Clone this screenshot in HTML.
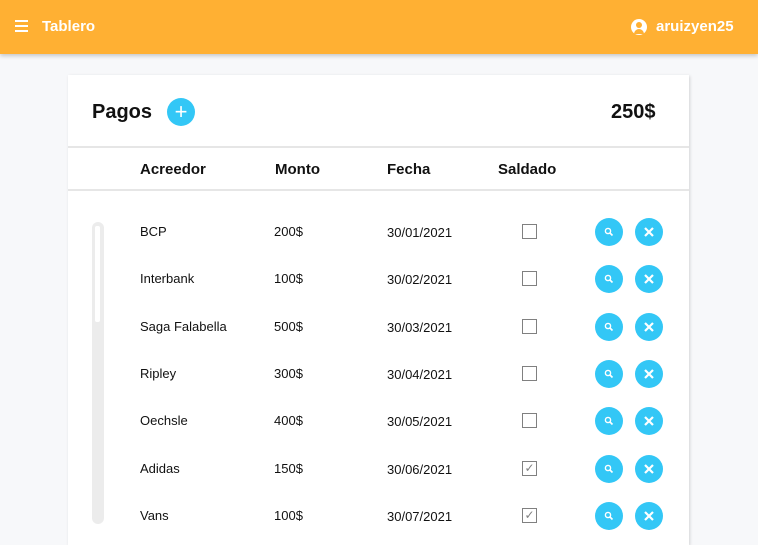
<!DOCTYPE html>
<html><head><style>
body{margin:0;width:758px;height:536px;overflow:hidden;background:#f7f8fa;font-family:"Liberation Sans",sans-serif;position:relative}
.top{position:absolute;left:0;top:0;width:758px;height:54px;background:#ffb033;box-shadow:0 2px 4px rgba(0,0,0,.2);color:#fff;font-weight:bold}
.card{position:absolute;left:68px;top:75px;width:621px;height:470px;background:#fff;box-shadow:1px 1px 3px rgba(0,0,0,.15)}
.abs{position:absolute}
.hd{font-weight:bold;font-size:15px;color:#111;top:161px}
.r{font-size:13px;color:#111}
.cb{position:absolute;left:522px;width:15px;height:15px;border:1.5px solid #808080;box-sizing:border-box}
.btn{position:absolute;width:28px;height:28px;border-radius:50%;background:#33c7f6}
</style></head><body>
<div class="top">
<div class="abs" style="left:15px;top:20px;width:13px;height:1.5px;background:#fff;box-shadow:0 5px 0 #fff,0 10px 0 #fff"></div>
<div class="abs" style="left:42px;top:18px;font-size:15px">Tablero</div>
<div class="abs" style="left:631px;top:19px;width:16px;height:16px;border-radius:50%;background:#fff"><div class="abs" style="left:5px;top:3px;width:6px;height:6px;border-radius:50%;background:#ffb033"></div><div class="abs" style="left:3px;top:10px;width:10px;height:5px;border-radius:5px 5px 0 0;background:#ffb033"></div></div>
<div class="abs" style="left:656px;top:18px;font-size:15px">aruizyen25</div>
</div>
<div class="card"></div>
<div class="abs" style="left:92px;top:101px;font-size:20px;font-weight:bold;color:#111">Pagos</div>
<div class="btn" style="left:167px;top:98px;color:#fff;font-size:22px;text-align:center;line-height:28px">+</div>
<div class="abs" style="left:611px;top:101px;font-size:20px;font-weight:bold;color:#111">250$</div>
<div class="abs" style="left:68px;top:146px;width:621px;height:2px;background:#e6e6e6"></div>
<div class="abs" style="left:68px;top:189px;width:621px;height:2px;background:#e6e6e6"></div>
<div class="abs hd" style="left:140px">Acreedor</div>
<div class="abs hd" style="left:275px">Monto</div>
<div class="abs hd" style="left:387px">Fecha</div>
<div class="abs hd" style="left:498px">Saldado</div>
<div class="abs" style="left:92px;top:222px;width:12px;height:302px;border-radius:6px;background:#ececec"><div class="abs" style="left:3px;top:4px;width:5px;height:96px;background:#fff;border-radius:2px"></div></div>
<div id="rows"></div>
<script>
var d=[["BCP","200$","30/01/2021",0],["Interbank","100$","30/02/2021",0],["Saga Falabella","500$","30/03/2021",0],["Ripley","300$","30/04/2021",0],["Oechsle","400$","30/05/2021",0],["Adidas","150$","30/06/2021",1],["Vans","100$","30/07/2021",1]];
var h="";d.forEach(function(r,i){var y=231+i*47.3;
h+='<div class="abs r" style="left:140px;top:'+(y-7)+'px">'+r[0]+'</div><div class="abs r" style="left:274px;top:'+(y-7)+'px">'+r[1]+'</div><div class="abs r" style="left:387px;top:'+(y-6)+'px">'+r[2]+'</div>';
h+='<div class="cb" style="top:'+(y-7)+'px;text-align:center;font-size:12px;line-height:12px;color:#808080">'+(r[3]?'✓':'')+'</div>';
h+='<div class="btn" style="left:595px;top:'+(y-13)+'px"><svg width="28" height="28"><circle cx="13" cy="13" r="2.6" fill="none" stroke="#fff" stroke-width="1.4"/><path d="M15 15l2.5 2.5" stroke="#fff" stroke-width="1.6"/></svg></div>';
h+='<div class="btn" style="left:635px;top:'+(y-13)+'px"><svg width="28" height="28"><path d="M10 10l8 8M18 10l-8 8" stroke="#fff" stroke-width="2.2"/></svg></div>';});
document.getElementById("rows").innerHTML=h;
</script>
</body></html>
